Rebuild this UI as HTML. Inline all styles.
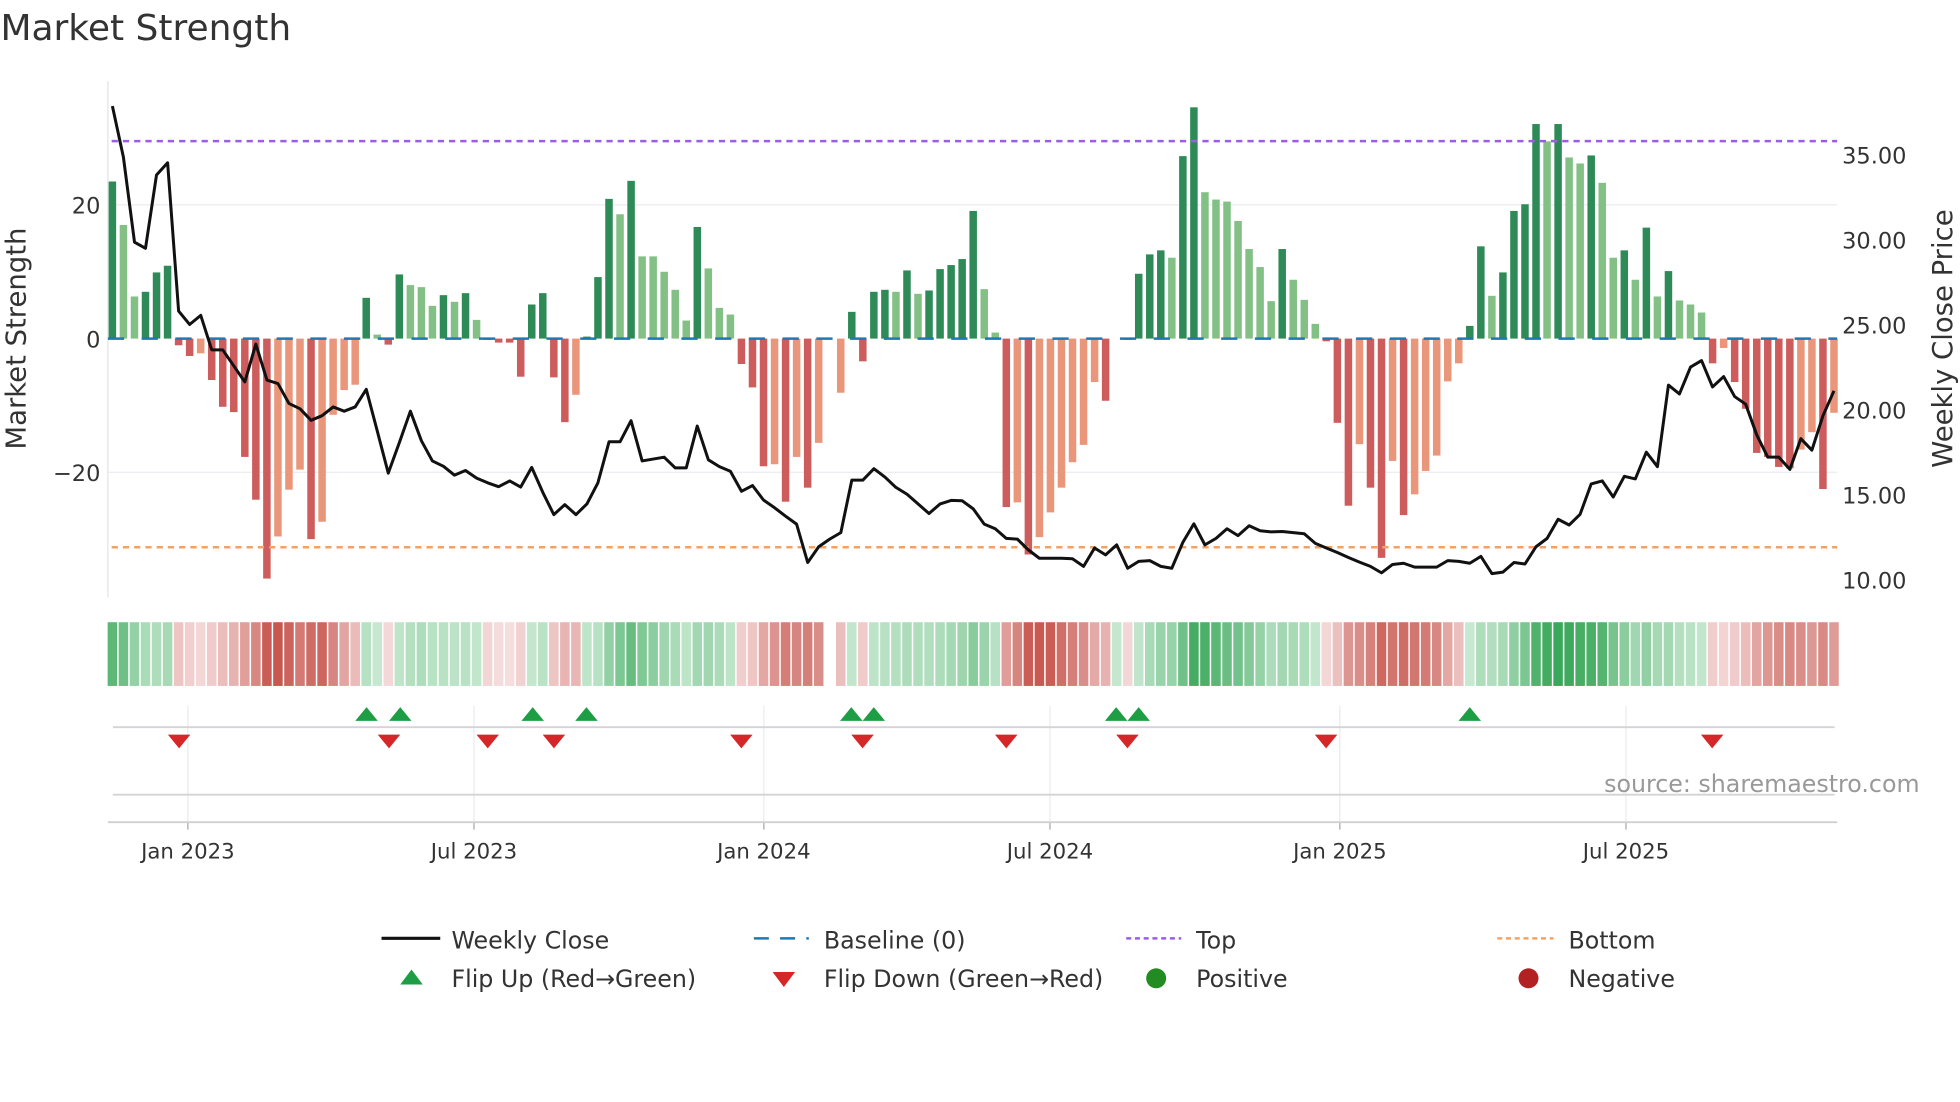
<!DOCTYPE html>
<html><head><meta charset="utf-8"><style>
html,body{margin:0;padding:0;background:#fff;}
svg{display:block;font-family:"DejaVu Sans","Liberation Sans",sans-serif;}
</style></head><body>
<svg id="s" width="1960" height="1102" viewBox="0 0 1568 882" xmlns="http://www.w3.org/2000/svg">
<rect width="1568" height="882" fill="#fff"/>
<text x="0" y="32" font-size="28.8" fill="#333">Market Strength</text>
<g id="grid"></g>
<g id="bars"></g>
<g id="over"></g>
<g id="heat"></g>
<g id="low"></g>
<text x="20" y="271" font-size="22" fill="#333" text-anchor="middle" transform="rotate(-90 20 271)" dy="0">Market Strength</text>
<text x="1562" y="271" font-size="22" fill="#333" text-anchor="middle" transform="rotate(-90 1562 271)">Weekly Close Price</text>
<g font-size="18" fill="#333" text-anchor="end">
<text x="80" y="171">20</text><text x="80" y="278">0</text><text x="80" y="385">−20</text>
</g>
<g font-size="18" fill="#333">
<text x="1474" y="131">35.00</text><text x="1474" y="199">30.00</text><text x="1474" y="267">25.00</text>
<text x="1474" y="335">20.00</text><text x="1474" y="403">15.00</text><text x="1474" y="471">10.00</text>
</g>
<g font-size="17" fill="#333" text-anchor="middle">
<text x="150" y="687">Jan 2023</text><text x="379" y="687">Jul 2023</text><text x="611" y="687">Jan 2024</text>
<text x="840" y="687">Jul 2024</text><text x="1072" y="687">Jan 2025</text><text x="1301" y="687">Jul 2025</text>
</g>
<text x="1536" y="634" font-size="19" fill="#999" text-anchor="end">source: sharemaestro.com</text>
<g font-size="19" fill="#333">
<line x1="305" y1="751" x2="352" y2="751" stroke="#111" stroke-width="2.5"/>
<text x="361" y="759">Weekly Close</text>
<line x1="603" y1="751" x2="647" y2="751" stroke="#1f77b4" stroke-width="2" stroke-dasharray="12 9"/>
<text x="659" y="759">Baseline (0)</text>
<line x1="901" y1="751" x2="945" y2="751" stroke="#9b5de5" stroke-width="2" stroke-dasharray="4 3"/>
<text x="957" y="759">Top</text>
<line x1="1198" y1="751" x2="1243" y2="751" stroke="#f4a261" stroke-width="2" stroke-dasharray="4 3"/>
<text x="1255" y="759">Bottom</text>
<polygon points="320,788 338,788 329,776" fill="#1e9e44"/>
<text x="361" y="790">Flip Up (Red→Green)</text>
<polygon points="618,778 636,778 627,790" fill="#d62728"/>
<text x="659" y="790">Flip Down (Green→Red)</text>
<circle cx="925" cy="783" r="8" fill="#228b22"/>
<text x="957" y="790">Positive</text>
<circle cx="1223" cy="783" r="8" fill="#b22222"/>
<text x="1255" y="790">Negative</text>
</g>
</svg>
<script>
var NS="http://www.w3.org/2000/svg";
function el(p,t,a){var e=document.createElementNS(NS,t);for(var k in a)e.setAttribute(k,a[k]);document.getElementById(p).appendChild(e);return e;}
var B=[[23.5,'D'],[17,'L'],[6.3,'L'],[7,'D'],[9.9,'D'],[10.9,'D'],[-1,'R'],[-2.6,'R'],[-2.2,'S'],[-6.2,'R'],[-10.2,'R'],[-11,'R'],[-17.7,'R'],[-24.1,'R'],[-35.9,'R'],[-29.6,'S'],[-22.6,'S'],[-19.6,'S'],[-30,'R'],[-27.4,'S'],[-11.4,'S'],[-7.7,'S'],[-6.9,'S'],[6.1,'D'],[0.6,'L'],[-0.9,'R'],[9.6,'D'],[8,'L'],[7.7,'L'],[4.9,'L'],[6.5,'D'],[5.5,'L'],[6.8,'D'],[2.8,'L'],[-0.2,'R'],[-0.6,'R'],[-0.6,'R'],[-5.7,'R'],[5.1,'D'],[6.8,'D'],
[-5.8,'R'],[-12.5,'R'],[-8.4,'S'],[0.3,'D'],[9.2,'D'],[20.9,'D'],[18.6,'L'],[23.6,'D'],[12.3,'L'],[12.3,'L'],[10,'L'],[7.3,'L'],[2.7,'L'],[16.7,'D'],[10.5,'L'],[4.6,'L'],[3.6,'L'],[-3.8,'R'],[-7.3,'R'],[-19.1,'R'],[-18.8,'S'],[-24.4,'R'],[-17.7,'S'],[-22.3,'R'],[-15.6,'S'],[0,'X'],[-8.1,'S'],[4,'D'],[-3.4,'R'],[7,'D'],[7.3,'D'],[7,'L'],[10.2,'D'],[6.7,'L'],[7.2,'D'],[10.4,'D'],[11,'D'],[11.9,'D'],[19.1,'D'],[7.4,'L'],
[0.9,'L'],[-25.2,'R'],[-24.5,'S'],[-32.3,'R'],[-29.7,'S'],[-26,'S'],[-22.3,'S'],[-18.5,'S'],[-15.9,'S'],[-6.5,'S'],[-9.3,'R'],[0,'X'],[-0.2,'X'],[9.7,'D'],[12.6,'D'],[13.2,'D'],[12.1,'L'],[27.3,'D'],[34.6,'D'],[21.9,'L'],[20.8,'L'],[20.5,'L'],[17.6,'L'],[13.4,'L'],[10.7,'L'],[5.6,'L'],[13.4,'D'],[8.8,'L'],[5.8,'L'],[2.2,'L'],[-0.4,'R'],[-12.6,'R'],[-25,'R'],[-15.8,'S'],[-22.3,'R'],[-32.8,'R'],[-18.3,'S'],[-26.4,'R'],[-23.3,'S'],[-19.8,'S'],
[-17.5,'S'],[-6.4,'S'],[-3.7,'S'],[1.9,'D'],[13.8,'D'],[6.4,'L'],[9.9,'D'],[19.1,'D'],[20.1,'D'],[32.1,'D'],[29.5,'L'],[32.1,'D'],[27.1,'L'],[26.2,'L'],[27.4,'D'],[23.3,'L'],[12.1,'L'],[13.2,'D'],[8.8,'L'],[16.6,'D'],[6.3,'L'],[10.1,'D'],[5.7,'L'],[5.1,'L'],[3.9,'L'],[-3.7,'R'],[-1.4,'S'],[-6.5,'R'],[-10.5,'R'],[-17.1,'R'],[-17.7,'R'],[-19.2,'R'],[-19.4,'R'],[-16.6,'S'],[-14,'S'],[-22.5,'R'],[-11.1,'S']];
var P=[42,175,397,413,222,190,577,612,588,678,678,720,762,663,757,766,818,832,862,850,827,838,827,781,890,1000,920,838,915,968,982,1005,993,1013,1025,1035,1020,1036,985,1050,
1108,1082,1108,1080,1025,918,918,863,968,963,958,986,986,877,965,983,995,1047,1032,1070,1090,1112,1133,1233,1192,1172,1155,1018,1018,988,1010,1037,1055,1080,1105,1080,1071,1072,1093,1133,
1145,1170,1172,1200,1222,1222,1222,1223,1243,1195,1213,1187,1248,1230,1228,1243,1248,1180,1132,1187,1170,1145,1163,1137,1150,1153,1152,1155,1158,1183,1195,1207,1220,1232,1243,1260,1238,1235,1245,1245,
1245,1228,1230,1235,1217,1262,1258,1233,1237,1192,1170,1120,1135,1107,1028,1020,1062,1008,1015,945,983,770,793,723,706,775,748,800,820,900,958,958,990,910,940,850,785];
var N=B.length, X0=89.6, DX=(1467.5-89.6)/(N-1), Z=271, K=5.35;
var C={D:'#2e8b57',L:'#82c085',R:'#cd5c5c',S:'#e9967a',X:'#cd5c5c'};
[164,378].forEach(function(y){el('grid','line',{x1:86,x2:1470,y1:y,y2:y,stroke:'#ececf0','stroke-width':1});});
el('grid','line',{x1:86,x2:86,y1:65,y2:478,stroke:'#e4e4e8','stroke-width':1});
[150,379,611,840,1072,1301].forEach(function(x){el('low','line',{x1:x,x2:x,y1:565,y2:658,stroke:'#ebebef','stroke-width':1});
el('low','line',{x1:x,x2:x,y1:658,y2:664,stroke:'#aaa','stroke-width':1});});
el('low','line',{x1:90,x2:1468,y1:582,y2:582,stroke:'#d4d4d8','stroke-width':1.5});
el('low','line',{x1:90,x2:1468,y1:636,y2:636,stroke:'#d4d4d8','stroke-width':1.5});
el('low','line',{x1:86,x2:1470,y1:658,y2:658,stroke:'#d0d0d4','stroke-width':1.5});
for(var i=0;i<N;i++){var v=B[i][0],x=X0+i*DX;if(Math.abs(v)<0.05)continue;var h=Math.abs(v)*K;
el('bars','rect',{x:x-3,y:v>0?Z-h:Z,width:6,height:h,fill:C[B[i][1]]});}
el('over','line',{x1:89,x2:1470,y1:113,y2:113,stroke:'#9b5de5','stroke-width':2,'stroke-dasharray':'5 4'});
el('over','line',{x1:89,x2:1470,y1:438,y2:438,stroke:'#f4a261','stroke-width':2,'stroke-dasharray':'5 4'});
el('over','line',{x1:86,x2:1470,y1:Z,y2:Z,stroke:'#1f77b4','stroke-width':2,'stroke-dasharray':'13 14'});
var d='';for(var i=0;i<N;i++){d+=(i?'L':'M')+(X0+i*DX).toFixed(1)+' '+(72+P[i]/3.26).toFixed(1);}
el('over','path',{d:d,fill:'none',stroke:'#111','stroke-width':2.4,'stroke-linejoin':'round'});
function mix(a,b,t){return 'rgb('+[0,1,2].map(function(k){return Math.round(a[k]+(b[k]-a[k])*t);}).join(',')+')';}
for(var i=0;i<N;i++){if(i==65)continue;var v=B[i][0];var s=0.5*Math.abs(v)+0.3*Math.abs(B[Math.max(0,i-1)][0])+0.2*Math.abs(B[Math.max(0,i-2)][0]);
var t=Math.min(1,s/30);var col=v>=0?mix([218,241,224],[58,168,90],t):mix([246,224,224],[200,87,79],t);
el('heat','rect',{x:X0+i*DX-DX/2+0.6,y:498,width:DX-1.2,height:51,fill:col});}
[293,320,426,469,681,699,893,911,1176].forEach(function(x){el('low','polygon',{points:(x-9)+',577 '+(x+9)+',577 '+x+',566',fill:'#1e9e44'});});
[143,311,390,443,593,690,805,902,1061,1370].forEach(function(x){el('low','polygon',{points:(x-9)+',588 '+(x+9)+',588 '+x+',599',fill:'#d62728'});});
</script>
</body></html>
